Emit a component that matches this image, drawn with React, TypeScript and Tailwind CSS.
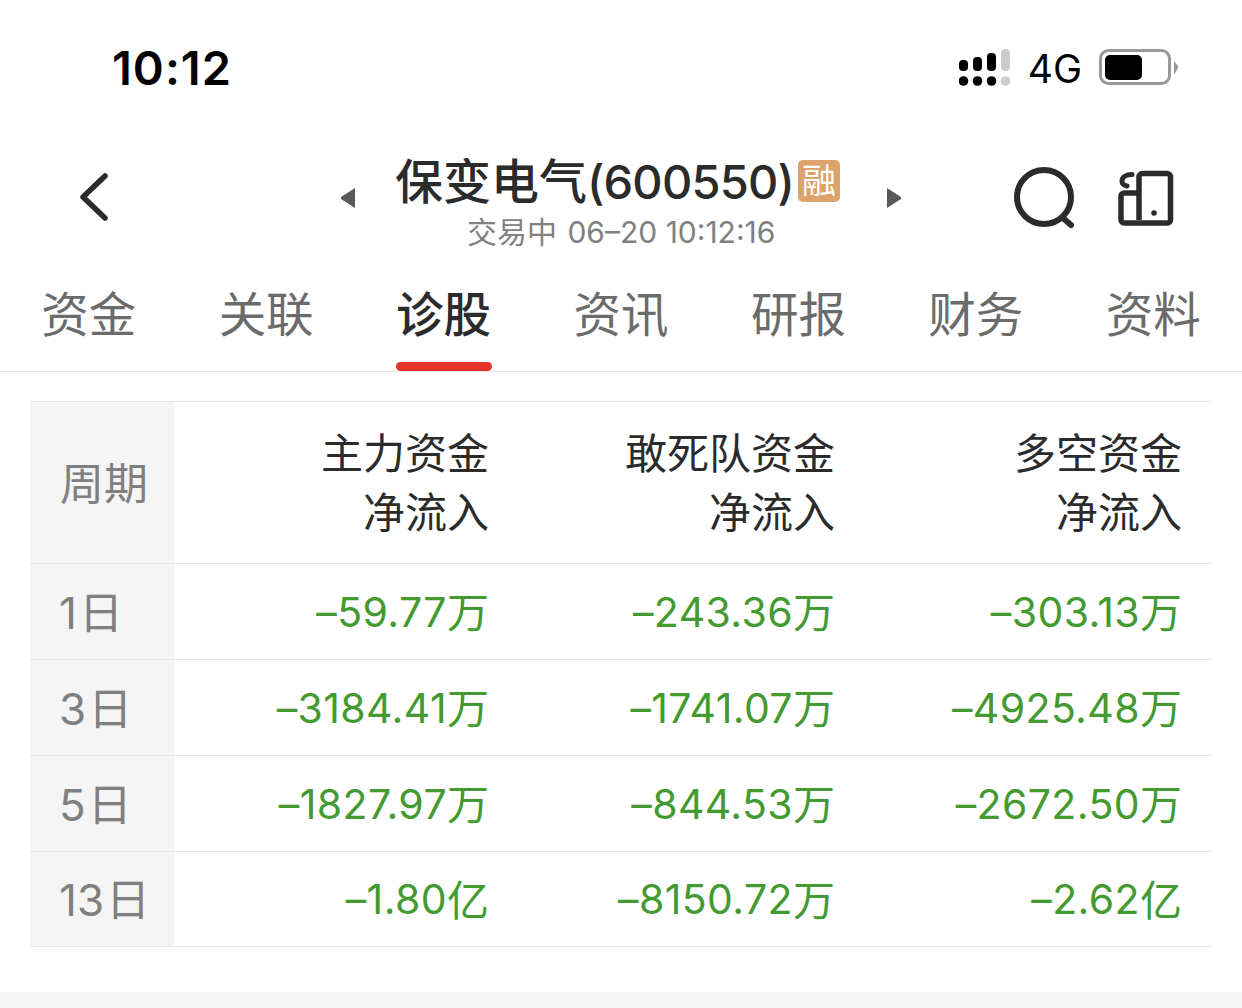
const font = { fontFamily: 'Inter, "Noto Sans CJK SC", sans-serif' };

const tabs = ["资金", "关联", "诊股", "资讯", "研报", "财务", "资料"];
const rows = [
  ["1", "–59.77", "万", "–243.36", "万", "–303.13", "万"],
  ["3", "–3184.41", "万", "–1741.07", "万", "–4925.48", "万"],
  ["5", "–1827.97", "万", "–844.53", "万", "–2672.50", "万"],
  ["13", "–1.80", "亿", "–8150.72", "万", "–2.62", "亿"],
];

function Signal() {
  return (
    <svg width="52" height="38" viewBox="0 0 52 38" className="block">
      <rect x="0" y="11" width="9" height="11" rx="4" fill="#000" />
      <rect x="14" y="8" width="9" height="14" rx="4" fill="#000" />
      <rect x="28" y="4" width="9" height="18" rx="4" fill="#000" />
      <rect x="42" y="0" width="9" height="22" rx="4" fill="#ccc" />
      <circle cx="4.5" cy="32" r="4.8" fill="#000" />
      <circle cx="18.5" cy="32" r="4.8" fill="#000" />
      <circle cx="32.5" cy="32" r="4.8" fill="#000" />
      <circle cx="46.5" cy="32" r="4.8" fill="#ccc" />
    </svg>
  );
}

function Battery() {
  return (
    <svg width="80" height="38" viewBox="0 0 80 38" className="block">
      <rect x="1.5" y="1.5" width="69" height="33" rx="8" fill="none" stroke="#999" strokeWidth="3" />
      <rect x="6" y="6" width="37" height="25" rx="5" fill="#000" />
      <path d="M75 12 L79 17 L79 19 L75 26 Z" fill="#999" />
    </svg>
  );
}

function Row({ r, last }: { r: string[]; last: boolean }) {
  return (
    <div className={`grid grid-cols-[144px_345px_346px_347px] border-b border-[#e6e6e6] ${last ? "h-[95px]" : "h-[96px]"}`}>
      <div className="bg-[#f5f5f5] flex items-center pl-[29px] pt-[2px] text-[44px] text-[#808080]">
        <span className="text-[44px]">{r[0]}</span>
        <span className="ml-[2px]">日</span>
      </div>
      {[1, 3, 5].map((i) => (
        <div key={i} className="pr-[30px] pt-[2px] flex items-center justify-end text-[42px] text-[#439a30] whitespace-nowrap">
          <span className="text-[41px] tracking-[0.4px]">{r[i]}</span>
          <span>{r[i + 1]}</span>
        </div>
      ))}
    </div>
  );
}

export default function App() {
  return (
    <div className="w-[1242px] h-[1008px] bg-white overflow-hidden flex flex-col" style={font}>
      {/* status bar */}
      <div className="h-[136px] shrink-0 flex items-start pl-[112px] pr-[63px]">
        <div className="mt-[41px] text-[47px] leading-[54px] font-semibold text-black tracking-[1px]">10:12</div>
        <div className="ml-auto mt-[49px] flex items-start">
          <Signal />
          <div className="ml-[17px] mt-[1px] text-[39px] leading-[38px] text-black">4G</div>
          <div className="ml-[17px]"><Battery /></div>
        </div>
      </div>

      {/* nav */}
      <div className="h-[134px] shrink-0 flex items-start pl-[77px]">
        <svg width="34" height="50" viewBox="0 0 34 50" className="mt-[36px] block">
          <path d="M28 4 L6 25 L28 46" fill="none" stroke="#2b2b2b" strokeWidth="5.5" strokeLinecap="round" strokeLinejoin="round" />
        </svg>
        <svg width="16" height="22" viewBox="0 0 16 22" className="ml-[229px] mt-[51px] block">
          <path d="M15 1 L15 21 L1 12 L1 10 Z" fill="#595959" />
        </svg>
        <div className="ml-[39px] w-[484px] shrink-0 flex flex-col items-start">
          <div className="flex items-center mt-[17px]">
            <span className="text-[48px] leading-[58px] font-medium text-[#2b2b2b] whitespace-nowrap">
              保变电气<span className="text-[47px] tracking-[-0.8px]">(600550)</span>
            </span>
            <span className="ml-[4px] -mt-[3px] w-[42px] h-[42px] rounded-[5px] bg-[#dca36c] text-white text-[34px] leading-[42px] text-center">融</span>
          </div>
          <div className="ml-[72px] mt-[3px] text-[30px] leading-[36px] text-[#808080] whitespace-nowrap">
            交易中 <span className="ml-[2px]">06–20 10:12:16</span>
          </div>
        </div>
        <svg width="16" height="22" viewBox="0 0 16 22" className="ml-[7px] mt-[51px] block">
          <path d="M1 1 L1 21 L15 12 L15 10 Z" fill="#595959" />
        </svg>
        <svg width="62" height="62" viewBox="0 0 62 62" className="ml-[112px] mt-[31px] block">
          <circle cx="30" cy="30" r="27" fill="none" stroke="#2b2b2b" strokeWidth="6" />
          <path d="M49 51 L57 58" fill="none" stroke="#2b2b2b" strokeWidth="6" strokeLinecap="round" />
        </svg>
        <svg width="56" height="56" viewBox="0 0 56 56" className="ml-[42px] mt-[34px] block">
          <path d="M21 50 V7 a3.5 3.5 0 0 1 3.5 -3.5 H49 a3.5 3.5 0 0 1 3.5 3.5 V50 a3 3 0 0 1 -3 3 H6 a3 3 0 0 1 -3 -3 V26 a3 3 0 0 1 3 -3 H21" fill="none" stroke="#2b2b2b" strokeWidth="5.5" strokeLinejoin="round" />
          <path d="M14 4.5 C8 4.5 4 7 4 11 C4 14 5 15 9 16" fill="none" stroke="#2b2b2b" strokeWidth="5" strokeLinecap="round" />
          <circle cx="36" cy="43" r="2.8" fill="#2b2b2b" />
        </svg>
      </div>

      {/* tabs */}
      <div className="h-[102px] shrink-0 grid grid-cols-7 border-b border-[#e6e6e6]">
        {tabs.map((t, i) => (
          <div key={t} className="relative flex justify-center">
            <span className={`mt-[16px] text-[47.5px] leading-[58px] ${i === 2 ? "font-medium text-[#2b2b2b]" : "text-[#6b6b6b]"}`}>{t}</span>
            {i === 2 && <span className="absolute left-[41px] bottom-0 w-[96px] h-[9px] rounded-full bg-[#e5352b]" />}
          </div>
        ))}
      </div>

      {/* table */}
      <div className="mt-[29px] ml-[30px] w-[1182px] border-t border-[#e6e6e6]">
        <div className="grid grid-cols-[144px_345px_346px_347px] h-[162px] border-b border-[#e6e6e6]">
          <div className="bg-[#f5f5f5] flex items-center pl-[30px] pt-[2px] text-[44px] text-[#808080]">周期</div>
          {[["主力资金", "净流入"], ["敢死队资金", "净流入"], ["多空资金", "净流入"]].map((h) => (
            <div key={h[0]} className="pr-[30px] pt-[22px] text-right text-[42px] leading-[59px] text-[#2b2b2b]">
              <div>{h[0]}</div>
              <div>{h[1]}</div>
            </div>
          ))}
        </div>
        {rows.map((r, i) => (
          <Row key={r[0]} r={r} last={i === rows.length - 1} />
        ))}
      </div>

      <div className="mt-[45px] flex-1 bg-[#f5f5f5]" />
    </div>
  );
}
